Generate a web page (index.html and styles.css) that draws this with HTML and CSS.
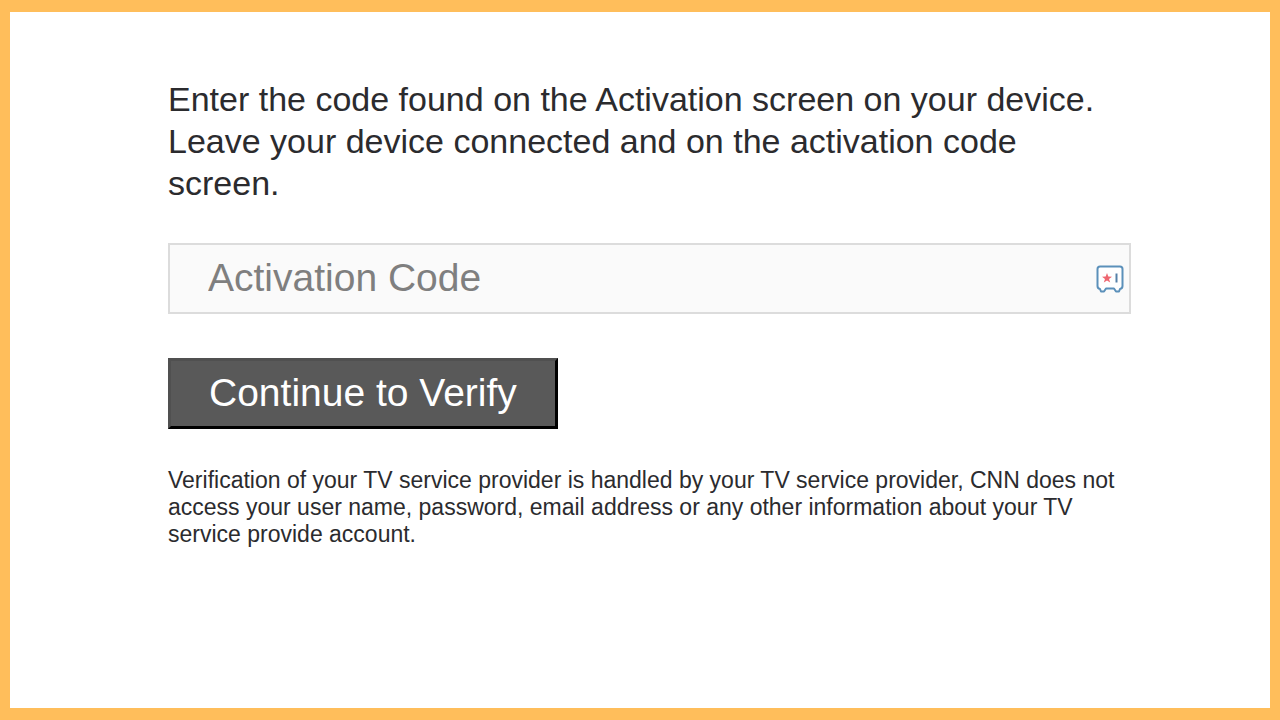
FILE: index.html
```html
<!DOCTYPE html>
<html lang="en">

<head>
  <meta charset="UTF-8">
  <meta name="viewport" content="width=device-width, initial-scale=1.0">
  <title>Activate your device</title>
  <link rel="stylesheet" href="styles.css">
</head>

<body>
  <main class="activate">
    <p class="activate-intro">Enter the code found on the Activation screen on your device. Leave your device connected and on the activation code screen.</p>
    <form class="activate-form">
      <div class="code-field">
        <input type="text" id="code" class="code-input" name="code" placeholder="Activation Code" aria-label="Activation Code">
        <svg class="code-icon" viewBox="0 0 28 28" aria-hidden="true">
          <path d="M4 1.5h20q2.500 0 2.500 2.500v17q0 2.500-2.500 3l-1 2.500h-3l-2-3h-8l-2 3h-3l-1-2.500q-2.500-.5-2.500-3v-17q0-2.500 2.500-2.500z" fill="#fff" stroke="#5b90ba" stroke-width="2" stroke-linejoin="round" />
          <path d="M11 8l1.300 3.600 3.700.1-3 2.300 1.200 3.600-3.200-2.100-3.200 2.100 1.200-3.600-3-2.300 3.700-.1z" fill="#ee6670" />
          <path d="M20.500 8.500v9" stroke="#5580a8" stroke-width="2" />
        </svg>
      </div>
      <button type="submit" class="verify-button">Continue to Verify</button>
    </form>
    <p class="activate-note">Verification of your TV service provider is handled by your TV service provider, CNN does not access your user name, password, email address or any other information about your TV service provide account.</p>
  </main>
</body>

</html>
```
FILE: styles.css
```css
* {
  box-sizing: border-box;
  margin: 0;
  padding: 0;
}

body {
  min-height: 100vh;
  border: solid #ffbe5b;
  border-width: 12px 10px;
  background-color: #fff;
  font-family: "Liberation Sans", Arial, sans-serif;
  color: #2b2b2e;
}

.activate {
  padding: 66px 139px 66px 158px;
}

.activate-intro {
  margin-bottom: 39px;
  font-size: 34px;
  line-height: 42px;
}

.code-field {
  position: relative;
  margin-bottom: 44px;
}

.code-input {
  display: block;
  width: 100%;
  height: 71px;
  padding: 0 48px 2px 38px;
  border: 2px solid #dcdcdc;
  background-color: #fafafa;
  font-family: inherit;
  font-size: 39px;
  color: #2b2b2e;
}

.code-input::placeholder {
  color: #7f7f7f;
}

.code-icon {
  position: absolute;
  top: 22px;
  right: 7px;
  width: 28px;
  height: 28px;
  fill: none;
}

.verify-button {
  display: block;
  height: 71px;
  padding: 0 38px 2px;
  margin-bottom: 38px;
  border: 3px solid #000;
  border-top-color: #505050;
  border-left-color: #505050;
  background-color: #595959;
  font-family: inherit;
  font-size: 39px;
  color: #fff;
}

.activate-note {
  font-size: 23px;
  line-height: 27px;
}
```
